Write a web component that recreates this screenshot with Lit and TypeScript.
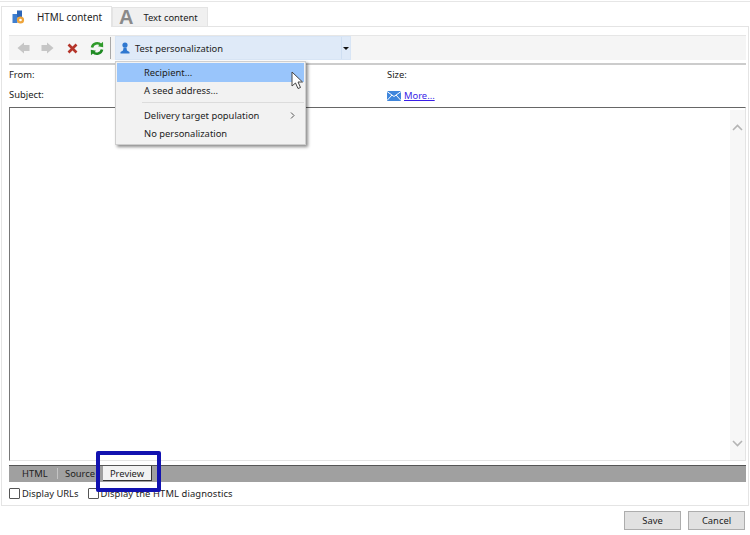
import { LitElement, html, css } from "lit";
import { customElement } from "lit/decorators.js";

@customElement("app-root")
export class AppRoot extends LitElement {
  static styles = css`
    :host { display: block; width: 750px; height: 535px; background: #fff; position: relative; overflow: hidden;
      font-family: "Noto Sans", "Open Sans", sans-serif; font-size: 9.4px; color: #222; }
    * { box-sizing: border-box; }
    .page { display: flex; flex-direction: column; height: 535px; padding-top: 1px; }
    .topline { height: 1px; background: #e6e6e6; flex: none; }
    .tabs { display: flex; align-items: flex-end; height: 24px; padding-left: 1px; flex: none; }
    .tab { display: flex; align-items: center; }
    .tab.active { width: 111px; height: 21px; background: #fff; border: 1px solid #e4e4e4; border-bottom: 0; padding-left: 10px; gap: 12px; margin-bottom: -1px; position: relative; z-index: 1; font-size: 9.9px; }
    .tab.other { width: 96px; height: 19px; background: #f0f0f0; border: 1px solid #e4e4e4; border-bottom: 0; padding-left: 6px; gap: 10px; }
    .biga { font-family: "Liberation Sans", sans-serif; font-weight: bold; font-size: 20px; color: #8a8a8a; line-height: 19px; }
    .panel { width: 748px; margin-left: 1px; height: 480px; border: 1px solid #e4e4e4; padding: 8px 2px 0 7px; display: flex; flex-direction: column; flex: none; }
    .toolbar { height: 25px; background: #f5f5f5; border-top: 1px solid #e6e6e6; display: flex; align-items: center; flex: none; padding-left: 8px; }
    .tools { display: flex; align-items: center; }
    .i1 { margin-right: 11px; }
    .i2 { margin-right: 13px; }
    .i3 { margin-right: 12px; }
    .sep { width: 1px; height: 22px; background: #a8a8a8; margin: 0 4px 0 6px; }
    .combo { width: 236px; height: 24px; background: #dfeaf8; border: 1px solid #d8e5f5; display: flex; align-items: center; padding-left: 4px; gap: 5px; }
    .combo .lab { flex: 1; }
    .combo .drop { width: 9px; height: 100%; border-left: 1px solid #cfdff2; display: flex; align-items: center; justify-content: center; }
    .tri { width: 0; height: 0; border-left: 3px solid transparent; border-right: 3px solid transparent; border-top: 3px solid #111; }
    .rule { height: 2px; background: #ccc; margin-top: 3px; flex: none; }
    .fields { display: grid; grid-template-columns: 378px 1fr; grid-template-rows: 19px 21px; height: 42px; flex: none; align-items: center; }
    .fields .more { display: flex; align-items: center; gap: 3px; margin-top: 2px; }
    a { color: #3a1fe8; text-decoration: underline; }
    .view { height: 354px; border: 1px solid #e4e4e4; border-top: 1px solid #666; border-left: 1px solid #777; flex: none; display: flex; justify-content: flex-end; }
    .scroll { width: 15px; background: #f7f7f7; margin-top: 2px; display: flex; flex-direction: column; justify-content: space-between; align-items: center; padding: 14px 0 13px; }
    .strip { height: 17px; margin-top: 4px; padding: 0 0 2px 13px; background: #a0a0a0; border-top: 1px solid #555; flex: none; display: flex; align-items: center; }
    .strip .html { width: 27px; margin-right: 8px; }
    .strip .vsep { width: 1px; height: 11px; background: #c4c4c4; margin-right: 7px; }
    .strip .src { width: 33px; }
    .strip .pv { width: 49px; height: 15px; margin-left: 5px; align-self: flex-start; background: #f2f2f2; border-right: 1px solid #333; border-bottom: 1px solid #333; display: flex; align-items: center; justify-content: center; }
    .checks { height: 23px; display: flex; align-items: center; flex: none; }
    .check { display: flex; align-items: center; gap: 2px; margin-right: 9px; }
    .check .long { letter-spacing: 0.1px; }
    .box { width: 11px; height: 11px; border: 1px solid #555; background: #fff; border-radius: 1px; }
    .actions { display: flex; justify-content: flex-end; gap: 7px; padding: 5px 5px 0 0; flex: none; }
    .btn { width: 57px; height: 19px; background: #e1e1e1; border: 1px solid #adadad; display: flex; align-items: center; justify-content: center; }
    .menu { position: absolute; left: 115px; top: 61px; width: 191px; height: 84px; background: #f2f2f2; border: 1px solid #cfcfcf; box-shadow: 2px 2px 3px rgba(0,0,0,.45); padding: 1px; z-index: 3; }
    .item { height: 18.5px; padding-left: 27px; display: flex; align-items: center; justify-content: space-between; padding-right: 9px; }
    .item.hot { background: #99c5fb; }
    .msep { height: 1px; background: #dcdcdc; margin: 2px 0 3px 25px; }
    .cursor { position: absolute; left: 291px; top: 71px; z-index: 4; }
    .mark { position: absolute; left: 96px; top: 451px; width: 65px; height: 41px; border: 4px solid #1212b0; border-radius: 2px; z-index: 5; }
  `;

  render() {
    return html`
      <div class="page">
        <div class="topline"></div>
        <div class="tabs">
          <div class="tab active">
            <svg width="13" height="14" viewBox="0 0 13 14">
              <rect x="0.5" y="4" width="5" height="9" fill="#3f7fd0"/>
              <rect x="5" y="0.5" width="5" height="7" fill="#2d66b8"/>
              <circle cx="8.5" cy="10" r="3.6" fill="#eea43a"/>
              <circle cx="8.5" cy="10" r="1.3" fill="#fff"/>
            </svg>
            <span>HTML content</span>
          </div>
          <div class="tab other"><span class="biga">A</span><span>Text content</span></div>
        </div>
        <div class="panel">
          <div class="toolbar">
            <div class="tools">
              <svg class="i1" width="13" height="12" viewBox="0 0 13 12"><path d="M0.5 6 L7 0.5 V3 H12.5 V9 H7 V11.5 Z" fill="#c6c6c6"/></svg>
              <svg class="i2" width="13" height="12" viewBox="0 0 13 12"><path d="M12.5 6 L6 0.5 V3 H0.5 V9 H6 V11.5 Z" fill="#c6c6c6"/></svg>
              <svg class="i3" width="11" height="11" viewBox="0 0 11 11"><path d="M1.5 1.5 L9.5 9.5 M9.5 1.5 L1.5 9.5" stroke="#b5352a" stroke-width="2.6"/></svg>
              <svg width="14" height="15" viewBox="0 0 14 15">
                <path d="M2 6.5 A5.2 5.2 0 0 1 11 4" fill="none" stroke="#2f9a2a" stroke-width="2.6"/>
                <path d="M8 5.2 L13.2 6.2 L13 0.8 Z" fill="#2f9a2a"/>
                <path d="M12 8.5 A5.2 5.2 0 0 1 3 11" fill="none" stroke="#1f8a22" stroke-width="2.6"/>
                <path d="M6 9.8 L0.8 8.8 L1 14.2 Z" fill="#1f8a22"/>
              </svg>
            </div>
            <div class="sep"></div>
            <div class="combo">
              <svg width="10" height="12" viewBox="0 0 10 12">
                <circle cx="5" cy="3" r="2.6" fill="#2f78d0"/>
                <path d="M3.6 5.5 H6.4 L7 8.5 L9.5 10 V11.5 H0.5 V10 L3 8.5 Z" fill="#2f78d0"/>
              </svg>
              <span class="lab">Test personalization</span>
              <div class="drop"><div class="tri"></div></div>
            </div>
          </div>
          <div class="rule"></div>
          <div class="fields">
            <span>From:</span><span>Size:</span>
            <span>Subject:</span>
            <span class="more">
              <svg width="14" height="10" viewBox="0 0 14 10">
                <rect width="14" height="10" fill="#3f86dc"/>
                <path d="M0 0.5 L7 5.5 L14 0.5 M0 9.5 L5 4 M14 9.5 L9 4" fill="none" stroke="#fff" stroke-width="1"/>
              </svg>
              <a href="#">More...</a>
            </span>
          </div>
          <div class="view">
            <div class="scroll">
              <svg width="11" height="7" viewBox="0 0 11 7"><path d="M1 6 L5.5 1.5 L10 6" fill="none" stroke="#b4b4b4" stroke-width="1.6"/></svg>
              <svg width="11" height="7" viewBox="0 0 11 7"><path d="M1 1 L5.5 5.5 L10 1" fill="none" stroke="#b4b4b4" stroke-width="1.6"/></svg>
            </div>
          </div>
          <div class="strip">
            <span class="html">HTML</span><div class="vsep"></div><span class="src">Source</span>
            <div class="pv"><span>Preview</span></div>
          </div>
          <div class="checks">
            <div class="check"><div class="box"></div><span>Display URLs</span></div>
            <div class="check"><div class="box"></div><span class="long">Display the HTML diagnostics</span></div>
          </div>
        </div>
        <div class="actions">
          <div class="btn">Save</div>
          <div class="btn">Cancel</div>
        </div>
      </div>
      <div class="menu">
        <div class="item hot"><span>Recipient...</span></div>
        <div class="item"><span>A seed address...</span></div>
        <div class="msep"></div>
        <div class="item"><span>Delivery target population</span>
          <svg width="5" height="7" viewBox="0 0 5 7"><path d="M1 0.5 L4 3.5 L1 6.5" fill="none" stroke="#555" stroke-width="1"/></svg>
        </div>
        <div class="item"><span>No personalization</span></div>
      </div>
      <svg class="cursor" width="13" height="19" viewBox="0 0 13 19">
        <path d="M1 1 V15 L4.5 12 L7 17.5 L9.5 16.5 L7 11 H11.5 Z" fill="#fff" stroke="#444" stroke-width="1"/>
      </svg>
      <div class="mark"></div>
    `;
  }
}
